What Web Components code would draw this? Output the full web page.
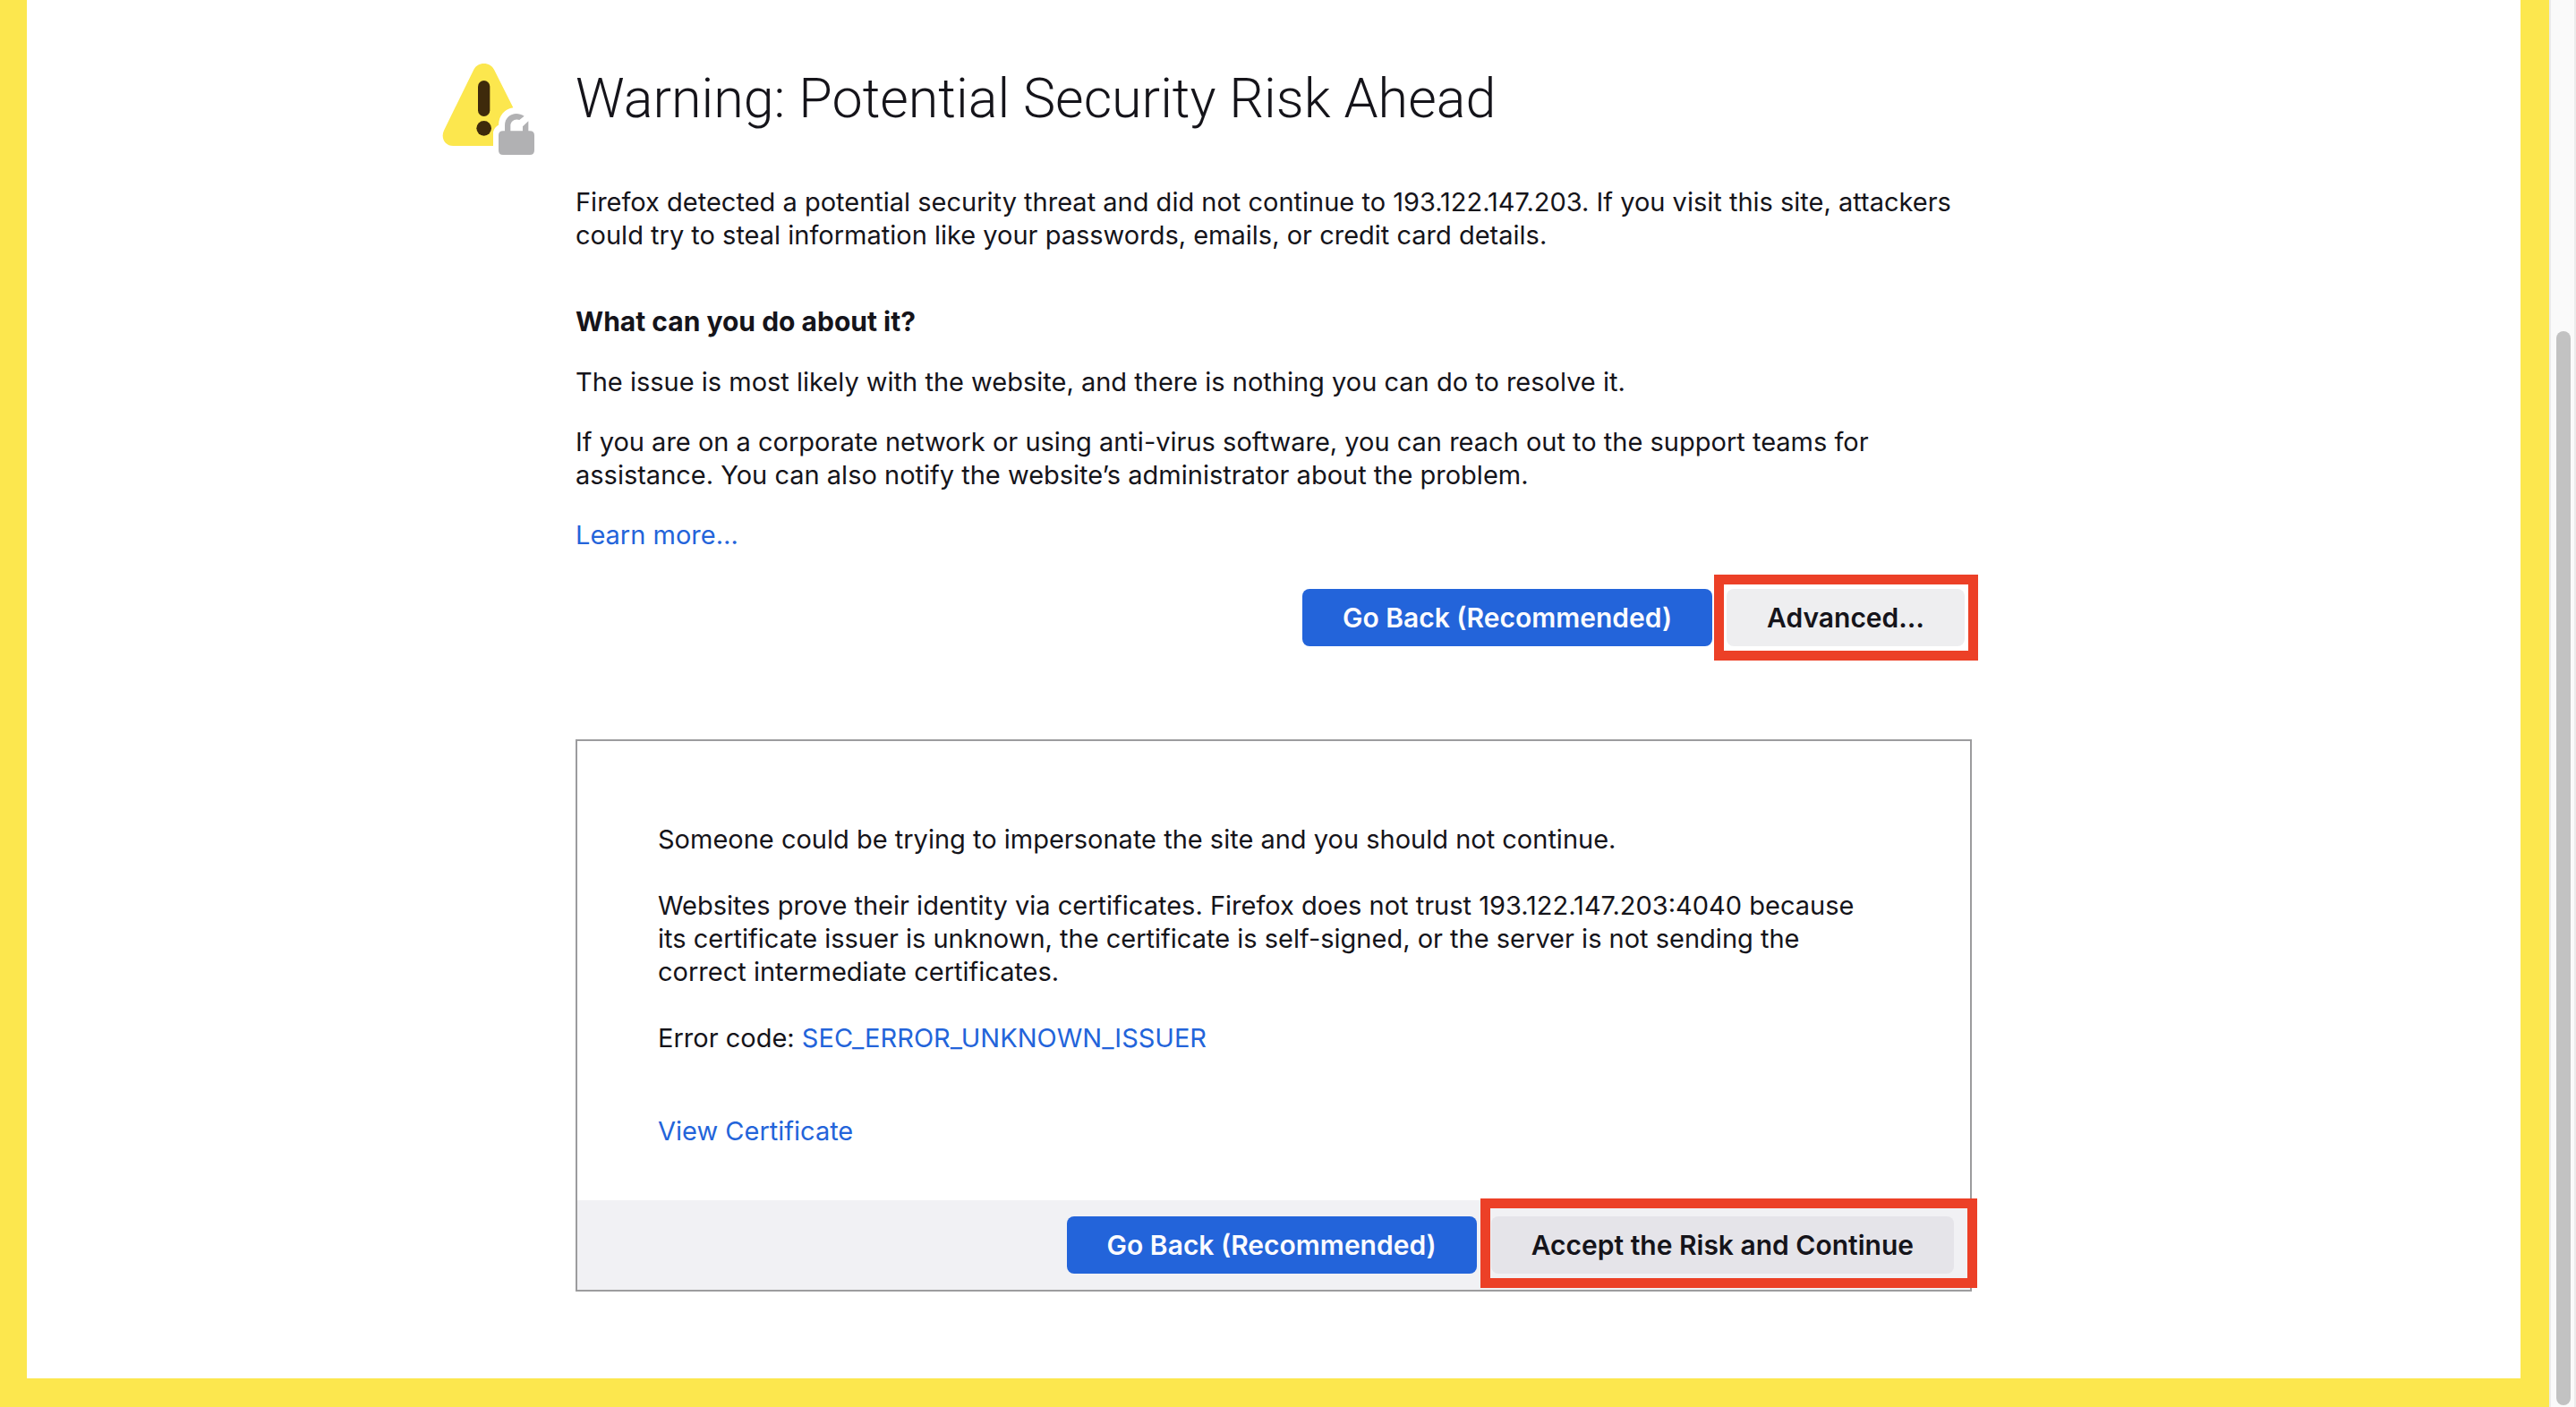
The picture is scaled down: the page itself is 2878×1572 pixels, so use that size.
<!DOCTYPE html>
<html lang="en">
<head>
<meta charset="utf-8">
<title>Warning: Potential Security Risk Ahead</title>
<style>
  body { margin: 0; background: #fff; color: #15141a; font: 400 29px/37px Inter, "Liberation Sans", sans-serif; }
</style>
</head>
<body>
<cert-error-page></cert-error-page>

<script>
const define = (name, html) => {
  const template = document.createElement('template');
  template.innerHTML = html;
  customElements.define(name, class extends HTMLElement {
    constructor() {
      super();
      this.attachShadow({ mode: 'open' }).append(template.content.cloneNode(true));
    }
  });
};

define('warning-icon', `
  <style>
    :host { display: block; width: 104px; height: 104px; }
    svg { display: block; width: 100%; height: 100%; }
  </style>
  <svg viewBox="72 60 312 312" aria-hidden="true">
    <path fill="#fce74e" d="M178 83C185 70 197 63 212 63s27 7 34 20l64 128c-27 3-48 25-49 58-11 6-18 16-18 28v42H109c-27 0-43-27-31-52z"/>
    <rect x="192" y="120" width="40" height="120" rx="20" fill="#3e2a0b"/>
    <circle cx="212" cy="280" r="25" fill="#3e2a0b"/>
    <path fill="#b1b1b3" d="M276 289h6v-19c0-34 36-50 65-31l-16 13c-15-6-30 4-30 19v18h41v-15l19-18v33h5q15 0 15 15v50q0 15-15 15h-90q-15 0-15-15v-50q0-15 15-15z"/>
  </svg>`);

define('action-button', `
  <style>
    :host { display: block; position: relative; --bg: #eeeef0; --fg: #15141a; }
    :host([primary]) { --bg: #2364da; --fg: #fbfbfe; }
    :host([shaded]) { --bg: #e5e4e9; }
    button { display: block; height: 64px; margin: 0; padding: 0 45px; border: 0; border-radius: 8px;
      background: var(--bg); color: var(--fg); font: inherit; font-size: 30px; font-weight: 600; white-space: nowrap; }
    .mark { display: none; position: absolute; inset: var(--mark-inset, -16px -15px -16px -14px);
      border: 11px solid #ec4027; pointer-events: none; }
    :host([marked]) .mark { display: block; }
  </style>
  <button type="button"><slot></slot></button>
  <div class="mark"></div>`);

define('text-link', `
  <style>
    :host { display: inline; }
    a { color: #2364da; text-decoration: none; }
  </style>
  <a href="#"><slot></slot></a>`);

define('button-row', `
  <style>
    :host { display: flex; justify-content: flex-end; gap: 16px; }
  </style>
  <slot></slot>`);

define('advanced-panel', `
  <style>
    :host { display: block; border: 2px solid #9c9c9e; }
    .body { padding: 91px 0 59px 90px; }
    p { margin: 0 0 37px; }
    .code { margin-bottom: 67px; }
    .view { margin-bottom: 0; }
    button-row { padding: 18px; background: #f1f1f4; }
    .accept { --mark-inset: -20px -26px -16px -12px; }
  </style>
  <div class="body">
    <p>Someone could be trying to impersonate the site and you should not continue.</p>
    <p>Websites prove their identity via certificates. Firefox does not trust 193.122.147.203:4040 because<br>
      its certificate issuer is unknown, the certificate is self-signed, or the server is not sending the<br>
      correct intermediate certificates.</p>
    <p class="code">Error code: <text-link>SEC_ERROR_UNKNOWN_ISSUER</text-link></p>
    <p class="view"><text-link>View Certificate</text-link></p>
  </div>
  <button-row>
    <action-button primary>Go Back (Recommended)</action-button>
    <action-button class="accept" shaded marked>Accept the Risk and Continue</action-button>
  </button-row>`);

define('page-scrollbar', `
  <style>
    :host { display: flex; flex-direction: column; box-sizing: border-box; width: 30px; height: 100vh;
      padding: 0 4px 2px 6px; border: solid #ebebeb; border-width: 0 2px; background: #fafafa; }
    .space { flex: 370; }
    .thumb { flex: 1200; border-radius: 8px; background: #c2c2c2; }
  </style>
  <div class="space"></div><div class="thumb"></div>`);

define('cert-error-page', `
  <style>
    :host { display: flex; min-height: 100vh; }
    main { flex: 1; box-sizing: border-box; border: solid #fce74e; border-width: 0 32px 32px 30px;
      display: grid; grid-template-columns: 1fr minmax(0, 1560px) 1fr; align-content: start; padding-top: 70px; }
    warning-icon { justify-self: end; margin-right: 45px; }
    h1 { margin: 0 0 57px; font: 300 61px/80px Roboto, Inter, sans-serif; }
    h2 { margin: 0 0 30px; font: inherit; font-size: 30px; font-weight: 700; }
    p { margin: 0 0 30px; white-space: nowrap; }
    .intro { margin-bottom: 60px; }
    advanced-panel { margin-top: 104px; }
    .actions { padding-right: 8px; margin-top: 42px; }
  </style>
  <main>
    <warning-icon></warning-icon>
    <div>
      <h1>Warning: Potential Security Risk Ahead</h1>
      <p class="intro">Firefox detected a potential security threat and did not continue to 193.122.147.203. If you visit this site, attackers<br>
        could try to steal information like your passwords, emails, or credit card details.</p>
      <h2>What can you do about it?</h2>
      <p>The issue is most likely with the website, and there is nothing you can do to resolve it.</p>
      <p>If you are on a corporate network or using anti-virus software, you can reach out to the support teams for<br>
        assistance. You can also notify the website’s administrator about the problem.</p>
      <p><text-link>Learn more…</text-link></p>
      <button-row class="actions">
        <action-button primary>Go Back (Recommended)</action-button>
        <action-button marked>Advanced…</action-button>
      </button-row>
      <advanced-panel></advanced-panel>
    </div>
  </main>
  <page-scrollbar></page-scrollbar>`);
</script>
</body>
</html>
